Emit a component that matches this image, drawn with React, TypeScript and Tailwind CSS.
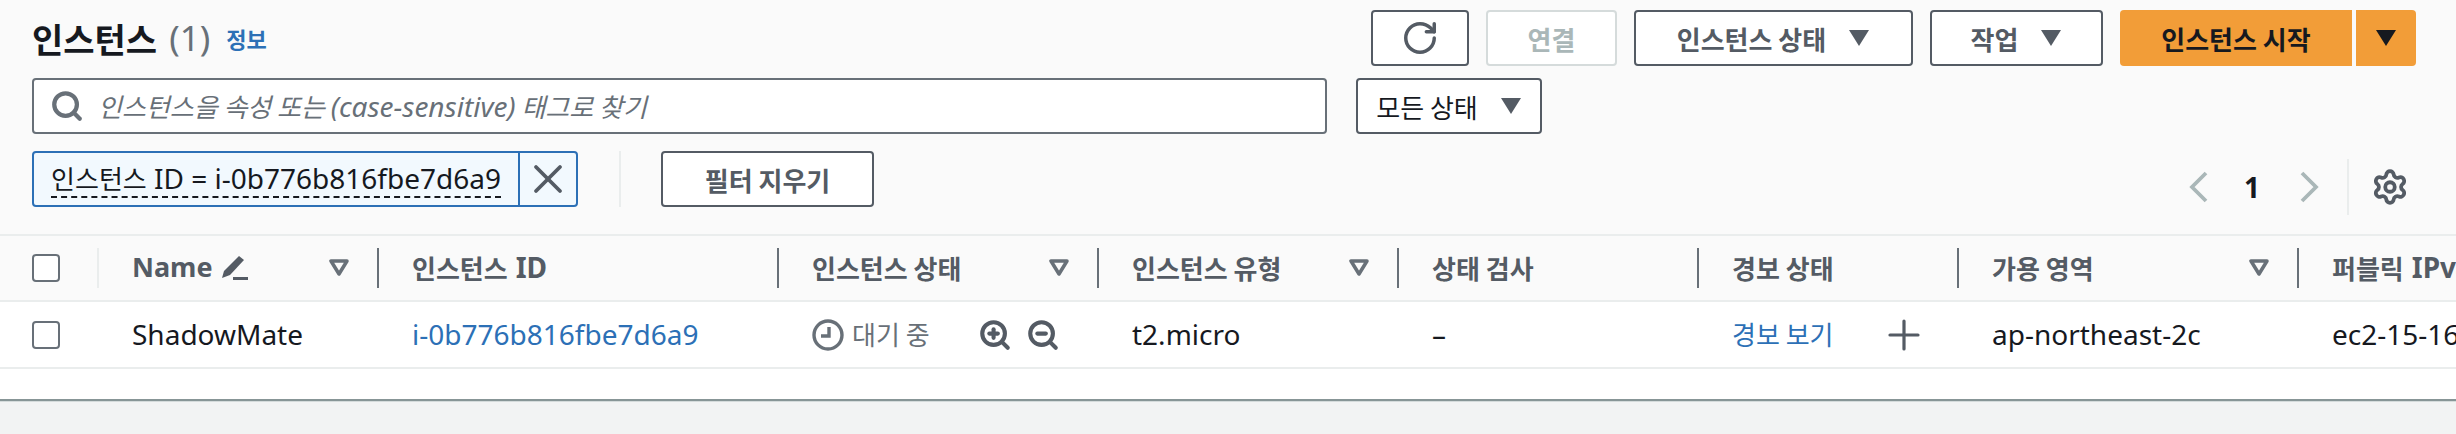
import { RotateCw, Search, X, Settings, Plus, ZoomIn, ZoomOut } from "lucide-react";

const FONT = "font-['Noto_Sans','Noto_Sans_CJK_KR',sans-serif]";
const ko = "text-[26px] font-['Noto_Sans_CJK_KR',sans-serif]";

function Caret({ className = "fill-[#545b64]" }: { className?: string }) {
  return (
    <svg width="22" height="18" viewBox="0 0 22 18" className={className}>
      <path d="M1 1h20L11 17z" />
    </svg>
  );
}

function FilterIcon() {
  return (
    <svg width="20" height="18" viewBox="0 0 20 18" fill="none" stroke="#687078" strokeWidth="3.5" className="shrink-0">
      <path d="M2 2h16l-8 13z" strokeLinejoin="round" />
    </svg>
  );
}

function PageArrow({ d }: { d: string }) {
  return (
    <svg width="22" height="32" viewBox="0 0 22 32" fill="none" stroke="#aab7b8" strokeWidth="3.8">
      <path d={d} />
    </svg>
  );
}

function PencilIcon() {
  return (
    <svg width="28" height="28" viewBox="0 0 28 28" className="ml-2 fill-[#545b64]">
      <path d="M1 25l2-7L18 3l5 4L9 22z" />
      <path d="M12 24h15v3H12z" />
    </svg>
  );
}

function ClockIcon() {
  return (
    <svg width="32" height="32" viewBox="0 0 32 32" fill="none" stroke="#687078" strokeWidth="3.4" className="shrink-0">
      <circle cx="16" cy="16" r="14" />
      <path d="M17 8v9h-8" />
    </svg>
  );
}

function Button({ width, label, caret }: { width: string; label: string; caret?: boolean }) {
  return (
    <button type="button" className={`${width} h-14 flex items-center justify-center gap-[22px] rounded-[4px] border-2 border-[#545b64] bg-white text-[#545b64] font-bold ${ko}`}>
      <span>{label}</span>
      {caret && <Caret />}
    </button>
  );
}

function Checkbox() {
  return <div className="w-[28px] h-[28px] rounded-[4px] border-2 border-[#687078] bg-white" />;
}

type Column = { width: string; label: React.ReactNode; filter?: boolean };

const columns: Column[] = [
  { width: "w-[280px]", label: <><span className="text-[27px]">Name</span><PencilIcon /></>, filter: true },
  { width: "w-[400px]", label: <><span className={ko}>인스턴스</span><span className="ml-2">ID</span></> },
  { width: "w-[320px]", label: <span className={ko}>인스턴스 상태</span>, filter: true },
  { width: "w-[300px]", label: <span className={ko}>인스턴스 유형</span>, filter: true },
  { width: "w-[300px]", label: <span className={ko}>상태 검사</span> },
  { width: "w-[260px]", label: <span className={ko}>경보 상태</span> },
  { width: "w-[340px]", label: <span className={ko}>가용 영역</span>, filter: true },
  { width: "w-[157px]", label: <><span className={ko}>퍼블릭</span><span className="ml-2">IPv4</span></> },
];

export default function App() {
  return (
    <div className={`w-[2456px] h-[434px] overflow-hidden bg-[#f2f3f3] ${FONT} text-[28px] text-[#16191f]`}>
      <div className="h-[399px] bg-white">
        <div className="h-[236px] bg-[#fafafa] border-b-2 border-[#eaeded] pt-[10px] pl-[32px] pr-[40px]">
          {/* Title + actions */}
          <div className="flex items-center justify-between h-14">
            <div className="flex items-center">
              <h1 className="text-[34px] font-bold font-['Noto_Sans_CJK_KR',sans-serif]">인스턴스</h1>
              <span className="ml-3 text-[35px] text-[#687078]">(1)</span>
              <span className="ml-4 text-[22px] font-bold text-[#2c70b6] font-['Noto_Sans_CJK_KR',sans-serif]">정보</span>
            </div>
            <div className="flex items-center gap-[17px]">
              <button type="button" className="w-[98px] h-14 flex items-center justify-center rounded-[4px] border-2 border-[#545b64] bg-white text-[#545b64]">
                <RotateCw size={38} strokeWidth={2.2} />
              </button>
              <button type="button" className={`w-[131px] h-14 rounded-[4px] border-2 border-[#d5dbdb] bg-white text-[#aab7b8] font-bold ${ko}`}>연결</button>
              <Button width="w-[279px]" label="인스턴스 상태" caret />
              <Button width="w-[173px]" label="작업" caret />
              <div className="flex h-14">
                <button type="button" className={`w-[232px] rounded-l-[4px] bg-[#f29d38] font-bold ${ko}`}>인스턴스 시작</button>
                <button type="button" className="w-[60px] ml-[4px] rounded-r-[4px] bg-[#f29d38] flex items-center justify-center">
                  <Caret className="fill-[#16191f]" />
                </button>
              </div>
            </div>
          </div>

          {/* Search */}
          <div className="flex items-center gap-[29px] mt-3">
            <div className="w-[1295px] h-14 flex items-center pl-[16px] rounded-[4px] border-2 border-[#687078] bg-white">
              <Search size={34} strokeWidth={3} className="text-[#687078]" />
              <span className="ml-[14px] italic text-[#687078] whitespace-nowrap">
                <span className={ko}>인스턴스을 속성 또는 </span>(case-sensitive)<span className={ko}> 태그로 찾기</span>
              </span>
            </div>
            <button type="button" className={`w-[186px] h-14 flex items-center justify-center gap-[22px] rounded-[4px] border-2 border-[#545b64] bg-white ${ko}`}>
              <span>모든 상태</span>
              <Caret />
            </button>
          </div>

          {/* Token + pagination */}
          <div className="flex items-start mt-[17px]">
            <div className="w-[546px] h-14 flex rounded-[4px] border-2 border-[#2c70b6] bg-[#f2f9fe]">
              <div className="w-[484px] flex items-center justify-center">
                <span className="border-b-2 border-dashed border-[#16191f] leading-[36px] whitespace-nowrap">
                  <span className={ko}>인스턴스</span> ID = i-0b776b816fbe7d6a9
                </span>
              </div>
              <div className="flex-1 flex items-center justify-center border-l-2 border-[#2c70b6]">
                <X size={48} strokeWidth={1.9} className="text-[#545b64]" />
              </div>
            </div>
            <div className="ml-[41px] w-[2px] h-14 bg-[#eaeded]" />
            <button type="button" className={`ml-[40px] w-[213px] h-14 rounded-[4px] border-2 border-[#545b64] bg-white text-[#545b64] font-bold ${ko}`}>필터 지우기</button>
            <div className="ml-auto flex items-center h-14 mt-[8px] mr-[7px]">
              <PageArrow d="M19 2L5 16l14 14" />
              <span className="ml-[35px] font-bold">1</span>
              <span className="ml-[39px]"><PageArrow d="M3 2l14 14L3 30" /></span>
              <div className="ml-[26px] w-[2px] h-14 bg-[#eaeded]" />
              <Settings size={38} strokeWidth={2.4} className="ml-[22px] text-[#545b64]" />
            </div>
          </div>
        </div>

        {/* Table header */}
        <div className="h-[66px] flex items-center bg-[#fafafa] border-b-2 border-[#eaeded] overflow-hidden">
          <div className="w-[99px] h-10 shrink-0 pl-[32px] flex items-center border-r-2 border-[#eaeded]"><Checkbox /></div>
          {columns.map((col, i) => (
            <div key={i} className={`${col.width} h-10 shrink-0 pl-[33px] pr-[28px] flex items-center justify-between font-bold text-[#545b64] whitespace-nowrap ${i < columns.length - 1 ? "border-r-2 border-[#687078]" : ""}`}>
              <div className="flex items-center pb-[2px]">{col.label}</div>
              {col.filter && <FilterIcon />}
            </div>
          ))}
        </div>

        {/* Row */}
        <div className="h-[67px] flex items-center bg-white border-b-2 border-[#eaeded] overflow-hidden whitespace-nowrap">
          <div className="w-[99px] shrink-0 pl-[32px] flex items-center"><Checkbox /></div>
          <div className="w-[280px] shrink-0 pl-[33px] pb-[2px]">ShadowMate</div>
          <div className="w-[400px] shrink-0 pl-[33px] pb-[2px] text-[#2c70b6]">i-0b776b816fbe7d6a9</div>
          <div className="w-[320px] shrink-0 pl-[33px] flex items-center text-[#687078]">
            <ClockIcon />
            <span className={`ml-2 pb-[2px] ${ko}`}>대기 중</span>
            <ZoomIn size={34} strokeWidth={2.9} className="ml-[48px] text-[#545b64]" />
            <ZoomOut size={34} strokeWidth={2.9} className="ml-[14px] text-[#545b64]" />
          </div>
          <div className="w-[300px] shrink-0 pl-[33px] pb-[2px]">t2.micro</div>
          <div className="w-[300px] shrink-0 pl-[33px] pb-[2px]">–</div>
          <div className="w-[260px] shrink-0 pl-[33px] flex items-center">
            <span className={`pb-[2px] text-[#2c70b6] ${ko}`}>경보 보기</span>
            <Plus size={48} strokeWidth={1.6} className="ml-[46px] text-[#545b64]" />
          </div>
          <div className="w-[340px] shrink-0 pl-[33px] pb-[2px]">ap-northeast-2c</div>
          <div className="w-[157px] shrink-0 pl-[33px] pb-[2px]">ec2-15-164-</div>
        </div>
      </div>
      <div className="h-[2px] bg-[#879596]" />
      <div className="h-[1px] bg-[#d5dbdb]" />
    </div>
  );
}
